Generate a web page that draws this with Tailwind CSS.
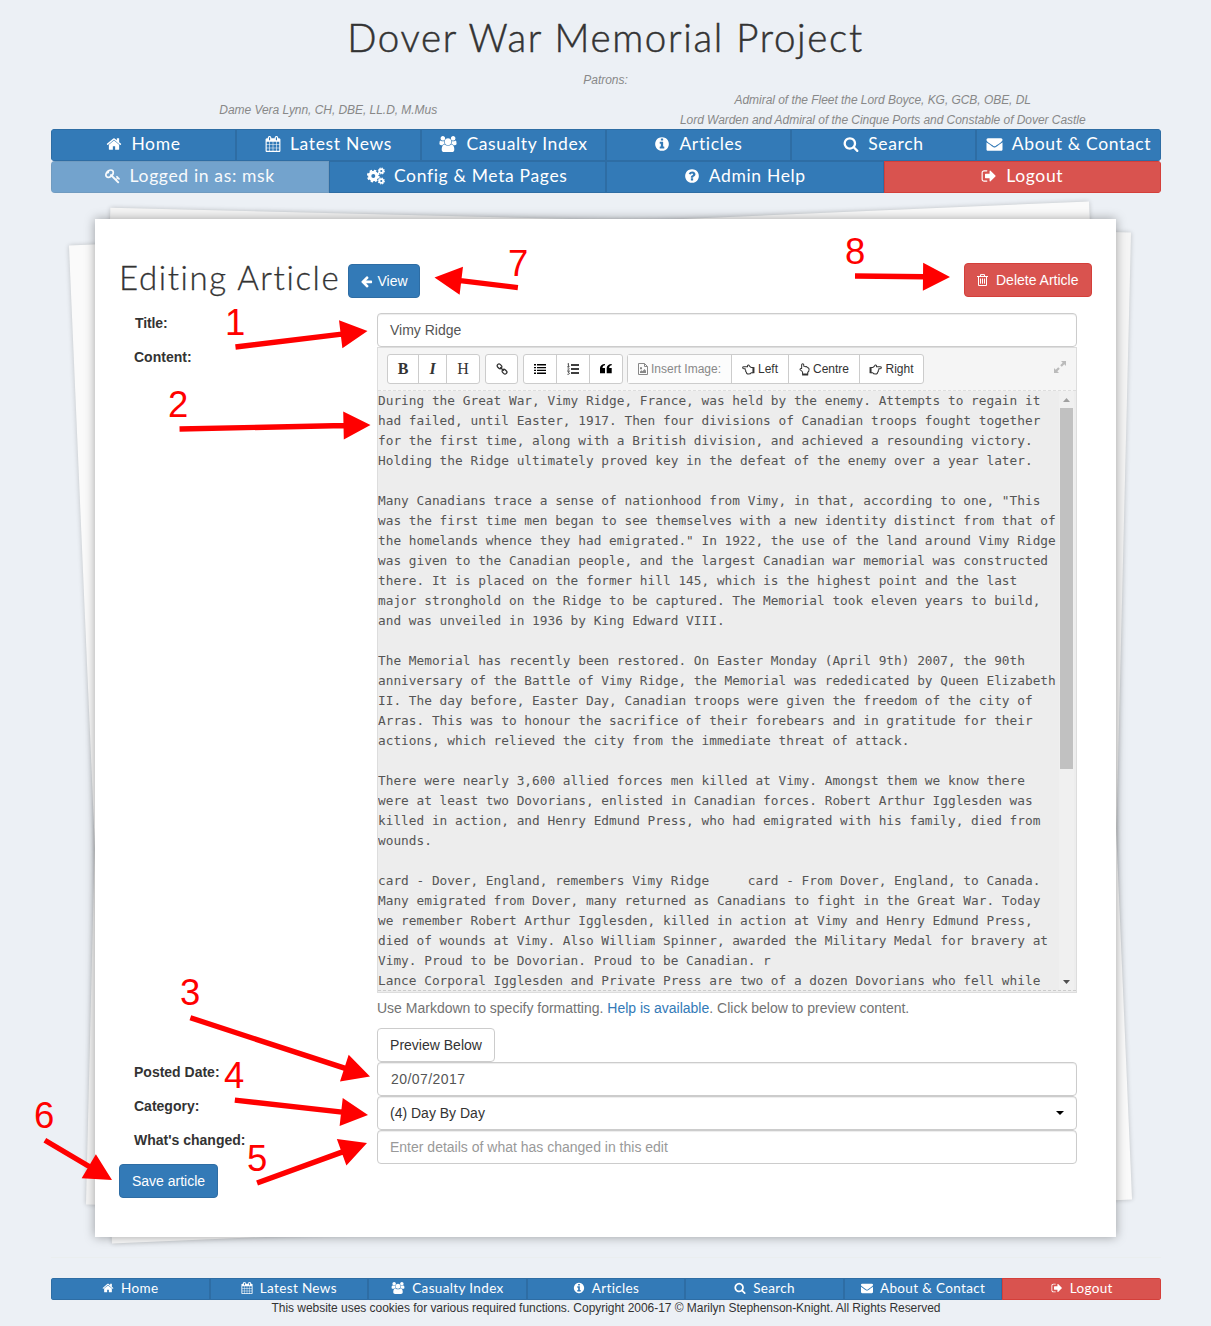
<!DOCTYPE html>
<html lang="en">
<head>
<meta charset="utf-8">
<title>Dover War Memorial Project</title>
<script src="https://cdn.jsdelivr.net/npm/@tailwindcss/browser@4"></script>
</head>
<body class="relative w-[1211px] h-[1326px] overflow-hidden bg-[#ecf0f5] font-['Liberation_Sans',Arial,sans-serif] text-sm leading-5 text-[#333]">
<svg class="hidden">
<symbol id="home" viewBox="0 0 1792 1792"><path d="M1472 992v480q0 26-19 45t-45 19h-384v-384h-256v384h-384q-26 0-45-19t-19-45v-480q0-1 .5-3t.5-3l575-474 575 474q1 2 1 6zm223-69l-62 74q-8 9-21 11h-3q-13 0-21-7l-692-577-692 577q-12 8-24 7-13-2-21-11l-62-74q-8-10-7-23.500t11-21.500l719-599q32-26 76-26t76 26l244 204v-195q0-14 9-23t23-9h192q14 0 23 9t9 23v408l219 182q10 8 11 21.500t-7 23.500z"/></symbol>
<symbol id="calendar" viewBox="0 0 1792 1792"><path d="M192 1664h288v-288h-288v288zm352 0h320v-288h-320v288zm-352-352h288v-320h-288v320zm352 0h320v-320h-320v320zm-352-384h288v-288h-288v288zm736 736h320v-288h-320v288zm-384-736h320v-288h-320v288zm768 736h288v-288h-288v288zm-384-352h320v-320h-320v320zm-352-864v-288q0-13-9.500-22.500t-22.500-9.500h-64q-13 0-22.500 9.500t-9.500 22.500v288q0 13 9.500 22.500t22.500 9.500h64q13 0 22.500-9.500t9.500-22.500zm736 864h288v-320h-288v320zm-384-384h320v-288h-320v288zm384 0h288v-288h-288v288zm32-480v-288q0-13-9.500-22.500t-22.500-9.500h-64q-13 0-22.500 9.500t-9.500 22.500v288q0 13 9.500 22.500t22.500 9.500h64q13 0 22.500-9.500t9.500-22.500zm384-64v1280q0 52-38 90t-90 38h-1408q-52 0-90-38t-38-90v-1280q0-52 38-90t90-38h128v-96q0-66 47-113t113-47h64q66 0 113 47t47 113v96h384v-96q0-66 47-113t113-47h64q66 0 113 47t47 113v96h128q52 0 90 38t38 90z"/></symbol>
<symbol id="users" viewBox="64 0 1920 1792"><path d="M657 896q-162 5-265 128h-134q-82 0-138-40.500t-56-118.500q0-353 124-353 6 0 43.500 21t97.500 42.500 119 21.500q67 0 133-23-5 37-5 66 0 139 81 256zm1071 637q0 120-73 189.500t-194 69.500h-874q-121 0-194-69.500t-73-189.500q0-53 3.500-103.500t14-109 26.500-108.500 43-97.500 62-81 85.500-53.500 111.500-20q10 0 43 21.500t73 48 107 48 135 21.500 135-21.500 107-48 73-48 43-21.500q61 0 111.500 20t85.500 53.500 62 81 43 97.500 26.500 108.500 14 109 3.500 103.500zm-1024-1277q0 106-75 181t-181 75-181-75-75-181 75-181 181-75 181 75 75 181zm704 384q0 159-112.500 271.500t-271.500 112.500-271.500-112.500-112.500-271.500 112.500-271.500 271.500-112.500 271.500 112.500 112.500 271.500zm576 225q0 78-56 118.500t-138 40.500h-134q-103-123-265-128 81-117 81-256 0-29-5-66 66 23 133 23 59 0 119-21.500t97.500-42.500 43.500-21q124 0 124 353zm-128-609q0 106-75 181t-181 75-181-75-75-181 75-181 181-75 181 75 75 181z"/></symbol>
<symbol id="info" viewBox="0 0 1792 1792"><path d="M1152 1376v-160q0-14-9-23t-23-9h-96v-512q0-14-9-23t-23-9h-320q-14 0-23 9t-9 23v160q0 14 9 23t23 9h96v320h-96q-14 0-23 9t-9 23v160q0 14 9 23t23 9h448q14 0 23-9t9-23zm-128-896v-160q0-14-9-23t-23-9h-192q-14 0-23 9t-9 23v160q0 14 9 23t23 9h192q14 0 23-9t9-23zm640 416q0 209-103 385.500t-279.500 279.500-385.500 103-385.500-103-279.500-279.500-103-385.500 103-385.500 279.500-279.500 385.500-103 385.500 103 279.500 279.500 103 385.500z"/></symbol>
<symbol id="question" viewBox="0 0 1792 1792"><path d="M1024 1376v-192q0-14-9-23t-23-9h-192q-14 0-23 9t-9 23v192q0 14 9 23t23 9h192q14 0 23-9t9-23zm256-672q0-88-55.500-163t-138.500-116-170-41q-243 0-371 213-15 24 8 42l132 100q7 6 19 6 16 0 25-12 53-68 86-92 34-24 86-24 48 0 85.500 26t37.500 59q0 38-20 61t-68 45q-63 28-115.500 86.500t-52.500 125.500v36q0 14 9 23t23 9h192q14 0 23-9t9-23q0-19 21.500-49.500t54.500-49.500q32-18 49-28.500t46-35 44.500-48 28-60.500 12.500-81zm384 192q0 209-103 385.500t-279.500 279.500-385.500 103-385.500-103-279.500-279.500-103-385.500 103-385.500 279.500-279.500 385.500-103 385.500 103 279.500 279.500 103 385.500z"/></symbol>
<symbol id="search" viewBox="0 0 1792 1792"><path d="M1216 832q0-185-131.500-316.500t-316.500-131.500-316.500 131.500-131.500 316.500 131.500 316.500 316.500 131.500 316.500-131.500 131.500-316.500zm512 832q0 52-38 90t-90 38q-54 0-90-38l-343-342q-179 124-399 124-143 0-273.500-55.500t-225-150-150-225-55.500-273.500 55.500-273.500 150-225 225-150 273.500-55.500 273.500 55.500 225 150 150 225 55.500 273.500q0 220-124 399l343 343q37 37 37 90z"/></symbol>
<symbol id="envelope" viewBox="0 0 1792 1792"><path d="M1792 710v794q0 66-47 113t-113 47h-1472q-66 0-113-47t-47-113v-794q44 49 101 87 362 246 497 345 57 42 92.500 65.500t94.500 48 110 24.500h2q51 0 110-24.500t94.500-48 92.500-65.500q170-123 498-345 57-39 100-87zm0-294q0 79-49 151t-122 123q-376 261-468 325-10 7-42.500 31t-54 38.500-52 32.500-57.500 27-50 9h-2q-23 0-50-9t-57.500-27-52-32.500-54-38.500-42.500-31q-91-64-262-182.500t-205-142.500q-62-42-117-115.500t-55-136.500q0-78 41.500-130t118.500-52h1472q65 0 112.500 47t47.500 113z"/></symbol>
<symbol id="signout" viewBox="0 0 1792 1792"><path d="M704 1440q0 4 1 20t.5 26.500-3 23.500-10 19.500-20.500 6.500h-320q-119 0-203.500-84.500t-84.500-203.500v-704q0-119 84.500-203.500t203.500-84.500h320q13 0 22.500 9.500t9.500 22.500q0 4 1 20t.5 26.500-3 23.500-10 19.500-20.500 6.500h-320q-66 0-113 47t-47 113v704q0 66 47 113t113 47h312l11.500 1 11.500 3 8 5.500 7 9 2 13.500zm928-544q0 26-19 45l-544 544q-19 19-45 19t-45-19-19-45v-288h-448q-26 0-45-19t-19-45v-384q0-26 19-45t45-19h448v-288q0-26 19-45t45-19 45 19l544 544q19 19 19 45z"/></symbol>
<symbol id="key" viewBox="0 0 1792 1792"><path d="M832 512q0-80-56-136t-136-56-136 56-56 136q0 42 19 83-41-19-83-19-80 0-136 56t-56 136 56 136 136 56 136-56 56-136q0-42-19-83 41 19 83 19 80 0 136-56t56-136zm851 704q0 17-49 66t-66 49q-9 0-28.500-16t-36.500-33-38.500-40-24.500-26l-96 96 220 220q28 28 28 68 0 42-39 81t-81 39q-40 0-68-28l-671-671q-176 131-365 131-163 0-265.500-102.500t-102.500-265.500q0-160 95-313t248-248 313-95q163 0 265.500 102.500t102.500 265.500q0 189-131 365l355 355 96-96q-3-3-26-24.500t-40-38.500-33-36.500-16-28.500q0-17 49-66t66-49q13 0 23 10 6 6 46 44.500t82 79.500 86.500 86 73 78 28.500 41z"/></symbol>
<symbol id="cogs" viewBox="0 0 18 18"><g fill="none" stroke="currentColor"><circle cx="6.300" cy="9" r="3.600" stroke-width="3.200"/><circle cx="6.300" cy="9" r="5.500" stroke-width="1.800" stroke-dasharray="2.360 1.960"/><circle cx="14.300" cy="4" r="1.900" stroke-width="1.700"/><circle cx="14.300" cy="4" r="3" stroke-width="1.100" stroke-dasharray="1.360 1"/><circle cx="14.300" cy="14" r="1.900" stroke-width="1.700"/><circle cx="14.300" cy="14" r="3" stroke-width="1.100" stroke-dasharray="1.360 1"/></g></symbol>
<symbol id="back" viewBox="0 0 1792 1792"><path d="M1664 896v128q0 53-32.500 90.500t-84.500 37.500h-704l293 294q38 36 38 90t-38 90l-75 76q-37 37-90 37-52 0-91-37l-651-652q-37-37-37-90 0-52 37-91l651-650q38-38 91-38 52 0 90 38l75 74q38 38 38 91t-38 91l-293 293h704q52 0 84.500 37.500t32.500 90.500z"/></symbol>
<symbol id="hand" viewBox="0 0 14 12"><path fill="none" stroke="currentColor" stroke-width="1.100" stroke-linejoin="round" d="M12.300 9.500H10C9.500 10.700 8.500 11 7 11c-1.700 0-2.300-.9-2.300-2C3.900 8.500 3.700 7.700 4 7 3.400 6.500 3.200 6 3.400 5.200H2C.2 5.200.2 2.900 2 2.900h4C5.400 1.300 7 .5 7.700 1.700c.6 1.300 1.600 1.900 2.300 2.200h2.300"/><path d="M11.300 3.400h2.200V10h-2.200z"/></symbol>
</svg>

<!-- Masthead -->
<header class="h-[129px] px-[51px]">
<h1 class="h-[70px] pt-[15px] text-center font-[Lato] font-light text-[38.500px] leading-[44px] tracking-[1.680px] whitespace-nowrap [-webkit-text-stroke:0.5px_#333]">Dover War Memorial Project</h1>
<div class="text-center text-xs leading-5 italic text-[#888] tracking-[-0.040px]">Patrons:</div>
<div class="grid grid-cols-2 items-center text-center text-xs leading-5 italic text-[#888] tracking-[-0.045px]">
<div>Dame Vera Lynn, CH, DBE, LL.D, M.Mus</div>
<div>Admiral of the Fleet the Lord Boyce, KG, GCB, OBE, DL<br>Lord Warden and Admiral of the Cinque Ports and Constable of Dover Castle</div>
</div>
</header>

<nav class="mr-[50px] ml-[51px] font-[Lato] text-[17.500px] text-white tracking-[0.650px] leading-[28px] whitespace-nowrap [&_svg]:size-4 [&_svg]:fill-current [&_a]:flex [&_a]:h-8 [&_a]:items-center [&_a]:justify-center [&_a]:gap-[9px] [&_a]:border [&_a]:border-[#2e6da4] [&_a]:bg-[#337ab7] [&_a]:pb-0.5">
<div class="grid grid-cols-6 overflow-hidden rounded-[4px]">
<a><svg><use href="#home"/></svg>Home</a><a><svg><use href="#calendar"/></svg>Latest News</a><a><svg class="w-[18px]!"><use href="#users"/></svg>Casualty Index</a><a><svg><use href="#info"/></svg>Articles</a><a><svg><use href="#search"/></svg>Search</a><a><svg class="w-[17px]!"><use href="#envelope"/></svg>About &amp; Contact</a>
</div>
<div class="grid grid-cols-4 overflow-hidden rounded-[4px]">
<a class="opacity-65"><svg><use href="#key"/></svg>Logged in as: msk</a><a><svg class="size-[18px]!"><use href="#cogs"/></svg>Config &amp; Meta Pages</a><a><svg><use href="#question"/></svg>Admin Help</a><a class="border-[#d43f3a]! bg-[#d9534f]!"><svg><use href="#signout"/></svg>Logout</a>
</div>
</nav>

<!-- Stack of paper -->
<main class="relative mt-[26px] ml-[95px] h-[1018px] w-[1021px]">
<div class="absolute top-[1px] left-[3px] h-[997px] w-[1021px] rotate-[1.400deg] bg-[#f5f5f5] shadow-[0_0_5px_rgba(0,0,0,0.2)]"></div>
<div class="absolute top-[4px] left-[-5px] h-[999px] w-[1021px] -rotate-[2.470deg] bg-[#fafafa] shadow-[0_0_5px_rgba(0,0,0,0.2)]"></div>
<div class="relative h-full bg-white px-6 pt-11 shadow-[0_0_10px_rgba(0,0,0,0.35)]">
<div class="flex h-[50px] justify-between">
<div class="flex">
<h2 class="-mt-0.5 w-[229px] font-[Lato] font-light text-[33px] leading-8 tracking-[1.600px] whitespace-nowrap [-webkit-text-stroke:0.3px_#333]">Editing Article</h2>
<a class="mt-px flex h-[34px] w-[72px] items-center justify-center gap-1 rounded-[4px] border border-[#2e6da4] bg-[#337ab7] text-white"><svg class="size-[13px] fill-current"><use href="#back"/></svg>View</a>
</div>
<a class="flex h-[34px] w-32 items-center gap-2 rounded-[4px] border border-[#d43f3a] bg-[#d9534f] pl-3 text-white"><svg class="h-3 w-[11px]" viewBox="0 0 11 12" fill="none" stroke="currentColor"><path d="M0 2.500h11M3.500 2.500V.6h4v1.900M1.500 3v8.500h8V3M3.500 4.500v5.200M5.500 4.500v5.200M7.500 4.500v5.200"/></svg>Delete Article</a>
</div>

<div class="ml-4 grid w-[942px] grid-cols-[242px_700px] [&_label]:font-bold [&_label]:whitespace-nowrap">
<label class="tracking-[-0.100px]">Title:</label>
<div class="h-[34px] rounded-[4px] border border-[#ccc] px-3 py-1.5 text-[#555] shadow-[inset_0_1px_1px_rgba(0,0,0,0.075)]">Vimy Ridge</div>
<label class="-ml-px">Content:</label>
<div class="h-[715px]">
<div class="h-[646px] border border-[#ddd] bg-[#ededed]">
<!-- Editor toolbar -->
<div class="flex h-[43px] items-start gap-[5px] border-b border-dashed border-[#ddd] bg-[#f5f5f5] pl-[9px] text-xs [&_b]:flex [&_b]:h-7 [&_b]:items-center [&_b]:justify-center [&_b]:gap-[3px] [&_b]:font-normal [&_b]:whitespace-nowrap [&_b+b]:border-l [&_b+b]:border-[#ccc]">
<div class="mt-1.5 flex h-[30px] rounded-[3px] border border-[#ccc] bg-white font-['Liberation_Serif'] text-base"><b class="w-[30px] font-bold!">B</b><b class="w-[28px] font-bold! italic">I</b><b class="w-[33px]">H</b></div>
<div class="mt-1.5 flex h-[30px] rounded-[3px] border border-[#ccc] bg-white"><b class="w-[31px]"><svg class="size-3" viewBox="0 0 12 12" fill="none" stroke="currentColor" stroke-width="1.300"><rect x="1" y="1.500" width="5" height="3.600" rx="1.600" transform="rotate(45 3.500 3.300)"/><rect x="6" y="6.900" width="5" height="3.600" rx="1.600" transform="rotate(45 8.500 8.700)"/><path d="M4.200 4.200l3.600 3.600"/></svg></b></div>
<div class="mt-1.5 flex h-[30px] rounded-[3px] border border-[#ccc] bg-white"><b class="w-8"><svg class="h-[10px] w-3" viewBox="0 0 12 10"><path d="M0 0h2v1.400H0zM0 2.900h2v1.400H0zM0 5.700h2v1.400H0zM0 8.500h2V10H0zM3 0h9v1.400H3zM3 2.900h9v1.400H3zM3 5.700h9v1.400H3zM3 8.500h9V10H3z"/></svg></b><b class="w-[33px]"><svg class="h-3 w-3" viewBox="0 0 12 12"><path d="M4 1.200h8v1.500H4zM4 5.200h8v1.500H4zM4 9.200h8v1.500H4z"/><path fill="none" stroke="currentColor" stroke-width=".8" d="M.5 1L1.500.4v3M.3 3.400h2.300M.4 5c1.800-.9 2.600.2.200 2.200h2M.4 8.600h2L1.300 9.800c2 0 1.300 2-.9 1.500"/></svg></b><b class="w-[33px]"><svg class="h-[10px] w-3" viewBox="0 0 12 10"><path d="M5 0v1.300C3.500 1.500 2.500 2.500 2.500 4H5v5.300H0V4C0 1.700 2 0 5 0zM11.700 0v1.300C10.200 1.500 9.200 2.500 9.200 4h2.500v5.300h-5V4c0-2.300 2-4 5-4z"/></svg></b></div>
<div class="mt-1.5 -ml-px flex h-[30px] rounded-[3px] border border-[#ccc] bg-white"><b class="w-[103px] bg-[#fcfcfc] text-[#888]"><svg class="h-3 w-[10px]" viewBox="0 0 10 12" fill="none" stroke="currentColor"><path d="M.5.5h6l3 3v8h-9zM6.500.5v3h3"/><path fill="currentColor" stroke="none" d="M2 4.200h2v2H2zM2 10V8.500l1.500-1.300 1 1L6.500 6 8 7.700V10z"/></svg>Insert Image:</b><b class="w-[57px]"><svg class="h-[11px] w-[13px] fill-current"><use href="#hand"/></svg>Left</b><b class="w-[71px]"><svg class="-mx-px h-[11px] w-[13px] rotate-90 -scale-y-100 fill-current"><use href="#hand"/></svg>Centre</b><b class="w-[64px]"><svg class="h-[11px] w-[13px] -scale-x-100 fill-current"><use href="#hand"/></svg>Right</b></div>
<svg class="mt-[13px] mr-[10px] ml-auto size-3 fill-[#bbb]" viewBox="0 0 12 12"><path d="M7 0h5v5l-1.700-1.700-2.500 2.500-1.600-1.600 2.500-2.500zM5 12H0V7l1.700 1.700 2.500-2.500 1.600 1.600-2.500 2.500z"/></svg>
</div>
<div class="flex h-[600px] overflow-hidden border-b border-dashed border-[#ccc]">
<pre class="w-[681px] font-['DejaVu_Sans_Mono',monospace] text-[12.790px] leading-5 tracking-[0.007px] text-[#555]">During the Great War, Vimy Ridge, France, was held by the enemy. Attempts to regain it
had failed, until Easter, 1917. Then four divisions of Canadian troops fought together
for the first time, along with a British division, and achieved a resounding victory.
Holding the Ridge ultimately proved key in the defeat of the enemy over a year later.

Many Canadians trace a sense of nationhood from Vimy, in that, according to one, "This
was the first time men began to see themselves with a new identity distinct from that of
the homelands whence they had emigrated." In 1922, the use of the land around Vimy Ridge
was given to the Canadian people, and the largest Canadian war memorial was constructed
there. It is placed on the former hill 145, which is the highest point and the last
major stronghold on the Ridge to be captured. The Memorial took eleven years to build,
and was unveiled in 1936 by King Edward VIII.

The Memorial has recently been restored. On Easter Monday (April 9th) 2007, the 90th
anniversary of the Battle of Vimy Ridge, the Memorial was rededicated by Queen Elizabeth
II. The day before, Easter Day, Canadian troops were given the freedom of the city of
Arras. This was to honour the sacrifice of their forebears and in gratitude for their
actions, which relieved the city from the immediate threat of attack.

There were nearly 3,600 allied forces men killed at Vimy. Amongst them we know there
were at least two Dovorians, enlisted in Canadian forces. Robert Arthur Igglesden was
killed in action, and Henry Edmund Press, who had emigrated with his family, died from
wounds.

card - Dover, England, remembers Vimy Ridge     card - From Dover, England, to Canada.
Many emigrated from Dover, many returned as Canadians to fight in the Great War. Today
we remember Robert Arthur Igglesden, killed in action at Vimy and Henry Edmund Press,
died of wounds at Vimy. Also William Spinner, awarded the Military Medal for bravery at
Vimy. Proud to be Dovorian. Proud to be Canadian. r
Lance Corporal Igglesden and Private Press are two of a dozen Dovorians who fell while</pre>
<div class="flex w-[15px] flex-col items-center bg-[#f0f0f0]">
<svg class="mt-[7px] h-1 w-[7px] fill-[#a0a0a0]" viewBox="0 0 7 4"><path d="M0 4L3.500 0 7 4z"/></svg>
<div class="mt-1.5 h-[361px] w-[13px] bg-[#c1c1c1]"></div>
<svg class="mt-auto mb-1.5 h-1 w-[7px] fill-[#505050]" viewBox="0 0 7 4"><path d="M0 0h7L3.500 4z"/></svg>
</div>
</div>
</div>
<p class="mt-[5px] h-[30px] text-[#737373]">Use Markdown to specify formatting. <span class="text-[#337ab7]">Help is available</span>. Click below to preview content.</p>
<a class="flex h-[34px] w-[118px] items-center justify-center rounded-[4px] border border-[#ccc] bg-white">Preview Below</a>
</div>
<label class="-ml-px">Posted Date:</label>
<div class="h-[34px] rounded-[4px] border border-[#ccc] py-1.5 pl-[13px] text-[#555] tracking-[0.450px] shadow-[inset_0_1px_1px_rgba(0,0,0,0.075)]">20/07/2017</div>
<label class="-ml-px">Category:</label>
<div class="flex h-[34px] items-center justify-between rounded-[4px] border border-[#ccc] px-3 shadow-[inset_0_1px_1px_rgba(0,0,0,0.075)]"><span>(4) Day By Day</span><svg class="h-1 w-2" viewBox="0 0 8 4"><path d="M0 0h8L4 4z"/></svg></div>
<label class="-ml-px">What's changed:</label>
<div class="h-[34px] rounded-[4px] border border-[#ccc] px-3 py-1.5 text-[#999] shadow-[inset_0_1px_1px_rgba(0,0,0,0.075)]">Enter details of what has changed in this edit</div>
</div>
<a class="flex h-[34px] w-[99px] items-center justify-center rounded-[4px] border border-[#2e6da4] bg-[#337ab7] text-white">Save article</a>
</div>
</main>

<footer class="mr-[50px] ml-[51px] mt-5 border-t border-[#eaeeef] pt-5 text-center text-xs">
<div class="grid grid-cols-7 overflow-hidden rounded-[3px] font-[Lato] text-[13.500px] leading-5 tracking-[0.350px] whitespace-nowrap text-white [&_svg]:size-3 [&_svg]:fill-current [&_a]:flex [&_a]:h-[22px] [&_a]:items-center [&_a]:justify-center [&_a]:gap-[7px] [&_a]:border [&_a]:border-[#2e6da4] [&_a]:bg-[#337ab7] [&_a]:pb-0.5">
<a><svg><use href="#home"/></svg>Home</a><a><svg><use href="#calendar"/></svg>Latest News</a><a><svg class="w-[14px]!"><use href="#users"/></svg>Casualty Index</a><a><svg><use href="#info"/></svg>Articles</a><a><svg><use href="#search"/></svg>Search</a><a><svg><use href="#envelope"/></svg>About &amp; Contact</a><a class="border-[#d43f3a]! bg-[#d9534f]!"><svg><use href="#signout"/></svg>Logout</a>
</div>
<p class="leading-4 tracking-[-0.040px]">This website uses cookies for various required functions. Copyright 2006-17 © Marilyn Stephenson-Knight. All Rights Reserved</p>
</footer>

<!-- Numbered callouts -->
<svg class="absolute inset-0 h-[1326px] w-[1211px] fill-[#f00] text-[36.500px]" viewBox="0 0 1211 1326">
<text x="225" y="335">1</text><text x="168" y="417">2</text><text x="180" y="1005">3</text><text x="224" y="1088">4</text><text x="247" y="1171">5</text><text x="34" y="1128">6</text><text x="508" y="276">7</text><text x="845" y="264">8</text>
<path transform="translate(367.500 331) rotate(-6.900)" d="M-27-14L0 0-27 14zM-133-2.700h107v5.400h-107z"/>
<path transform="translate(370.500 425) rotate(-1.200)" d="M-27-14L0 0-27 14zM-191-2.700h165v5.400h-165z"/>
<path transform="translate(370 1076.500) rotate(18.100)" d="M-27-14L0 0-27 14zM-189-2.700h163v5.400h-163z"/>
<path transform="translate(368 1115) rotate(6.400)" d="M-27-14L0 0-27 14zM-134-2.700h108v5.400h-108z"/>
<path transform="translate(367 1143) rotate(-20)" d="M-27-14L0 0-27 14zM-117-2.700h91v5.400h-91z"/>
<path transform="translate(112 1180) rotate(30.600)" d="M-27-14L0 0-27 14zM-78-2.700h52v5.400h-52z"/>
<path transform="translate(434.500 277.500) rotate(-173.100)" d="M-27-14L0 0-27 14zM-84-2.700h58v5.400h-58z"/>
<path transform="translate(950 277) rotate(.6)" d="M-27-14L0 0-27 14zM-95-2.700h69v5.400h-69z"/>
</svg>
</body>
</html>
